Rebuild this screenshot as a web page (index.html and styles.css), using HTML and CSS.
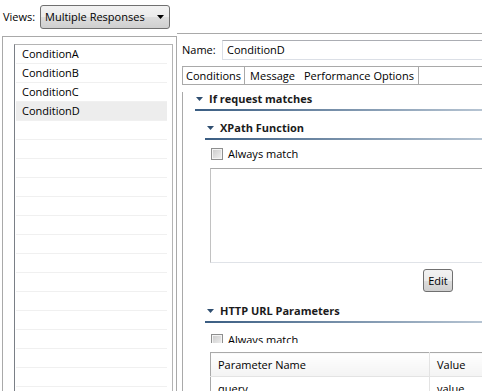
FILE: index.html
```html
<!DOCTYPE html>
<html lang="en">
<head>
    <meta charset="UTF-8">
    <meta name="viewport" content="width=device-width, initial-scale=1.0">
    <title>Multiple Responses</title>
    <link rel="stylesheet" href="styles.css">
</head>
<body>
    <div class="toolbar">
        <span class="views-label">Views:</span>
        <div class="combo">
            <span>Multiple Responses</span>
            <svg class="combo-arrow" width="7" height="4" viewBox="0 0 7 4"><path d="M0 0H7L3.5 4Z" fill="#000"/></svg>
        </div>
    </div>

    <div class="main">
        <div class="left-panel">
            <ul class="cond-list">
                <li>ConditionA</li>
                <li>ConditionB</li>
                <li>ConditionC</li>
                <li class="selected">ConditionD</li>
                <li></li><li></li><li></li><li></li><li></li>
                <li></li><li></li><li></li><li></li><li></li>
                <li></li><li></li><li></li><li></li><li></li>
            </ul>
        </div>

        <div class="right-pane">
            <div class="name-row">
                <span class="name-label">Name:</span>
                <div class="textfield">ConditionD</div>
            </div>

            <div class="tabfolder">
                <div class="tabs">
                    <div class="tab active">Conditions</div>
                    <div class="tab">Message</div>
                    <div class="tab last">Performance Options</div>
                </div>

                <div class="tab-body">
                    <div class="section">
                        <div class="section-title top">
                            <svg class="twisty" width="7" height="4" viewBox="0 0 7 4"><path d="M0 0H7L3.5 4Z"/></svg>If request matches
                        </div>
                        <div class="section-body">
                            <div class="section">
                                <div class="section-title sub">
                                    <svg class="twisty" width="7" height="4" viewBox="0 0 7 4"><path d="M0 0H7L3.5 4Z"/></svg>XPath Function
                                </div>
                                <div class="sub-body">
                                    <div class="check-row"><span class="checkbox"></span>Always match</div>
                                    <div class="textarea"></div>
                                    <div class="button-row"><button class="btn">Edit</button></div>
                                </div>
                            </div>

                            <div class="section">
                                <div class="section-title sub http">
                                    <svg class="twisty" width="7" height="4" viewBox="0 0 7 4"><path d="M0 0H7L3.5 4Z"/></svg>HTTP URL Parameters
                                </div>
                                <div class="sub-body">
                                    <div class="check-row clipped"><span class="checkbox"></span>Always match</div>
                                    <table class="params">
                                        <tr>
                                            <th class="col-name">Parameter Name</th>
                                            <th>Value</th>
                                        </tr>
                                        <tr>
                                            <td class="col-name">query</td>
                                            <td>value</td>
                                        </tr>
                                    </table>
                                </div>
                            </div>
                        </div>
                    </div>
                </div>
            </div>
        </div>
    </div>
</body>
</html>
```

FILE: styles.css
```css
html, body {
    margin: 0;
    padding: 0;
    width: 482px;
    height: 391px;
    overflow: hidden;
    background: #fff;
}
body {
    font-family: 'Open Sans', 'Noto Sans', sans-serif;
    font-size: 11px;
    line-height: 14px;
    color: #000;
}

/* top bar */
.toolbar {
    display: flex;
    align-items: center;
    height: 24px;
    padding: 5px 0 4px 3px;
}
.views-label {
    width: 37px;
}
.combo {
    box-sizing: border-box;
    width: 130px;
    height: 24px;
    display: flex;
    align-items: center;
    justify-content: space-between;
    padding: 0 5px 0 4px;
    border: 1px solid #707070;
    border-radius: 3px;
    background: linear-gradient(#f2f2f2 0%, #ebebeb 50%, #dddddd 51%, #cfcfcf 100%);
}

.main {
    display: flex;
    align-items: flex-start;
    height: 358px;
}

/* left list */
.left-panel {
    box-sizing: border-box;
    flex-shrink: 0;
    width: 175px;
    height: 400px;
    margin: 3px 0 0 2px;
    padding: 7px 3px 0 11px;
    border: 1px solid #a9a9a9;
}
.cond-list {
    list-style: none;
    margin: 0;
    padding: 0 5px 0 1px;
    height: 400px;
    border: 1px solid #b4b4b4;
    border-left-color: #7a7f86;
}
.cond-list li {
    box-sizing: border-box;
    height: 19px;
    line-height: 18px;
    padding-left: 6px;
    border-bottom: 1px solid #f0f0f0;
}
.cond-list li.selected {
    background: #ededed;
}

/* right side */
.right-pane {
    flex-shrink: 0;
    width: 340px;
    height: 400px;
    padding-left: 5px;
    border-top: 1px solid #a9a9a9;
}
.name-row {
    display: flex;
    align-items: center;
    margin-top: 6px;
}
.name-label {
    width: 40px;
}
.textfield {
    box-sizing: border-box;
    flex: 1;
    height: 20px;
    line-height: 18px;
    padding-left: 4px;
    border: 1px solid #dbdfe6;
    border-top-color: #abadb3;
}

.tabfolder {
    margin-top: 6px;
}
.tabs {
    display: flex;
    height: 17px;
    border-top: 1px solid #a9a9a9;
    border-bottom: 1px solid #a9a9a9;
}
.tab {
    line-height: 17px;
    padding: 0 4px 0 5px;
}
.tab.active {
    padding: 0 3px;
    margin-top: -1px;
    border: 1px solid #a9a9a9;
    border-bottom: none;
    border-top-left-radius: 2px;
}
.tab.last {
    border-right: 1px solid #a9a9a9;
}
.tab-body {
    height: 320px;
    padding-left: 12px;
    border-left: 1px solid #a9a9a9;
}

/* form sections */
.section-title {
    font-weight: bold;
    color: #1b1b1b;
    padding-bottom: 3px;
    border-bottom: 2px solid #3c5f84;
    border-image: linear-gradient(to right, #3a5d82, #c8d3de) 1;
}
.section-title.top {
    margin-top: 7px;
}
.section-title.sub {
    margin-top: 10px;
}
.section-title.http {
    margin-top: 12px;
}
.twisty {
    fill: #2f4e70;
    vertical-align: middle;
    margin: -2px 6px 0 1px;
}
.section-title.sub .twisty {
    margin-left: 2px;
}
.section-body {
    padding-left: 10px;
}
.sub-body {
    padding-left: 5px;
}

.check-row {
    display: flex;
    align-items: center;
    height: 14px;
    margin-top: 7px;
}
.check-row.clipped {
    height: 10px;
    margin-top: 10px;
    align-items: flex-start;
    overflow: hidden;
}
.checkbox {
    box-sizing: border-box;
    width: 12px;
    height: 12px;
    margin: 0 5px 0 1px;
    border: 1px solid #8e8f8f;
    box-shadow: inset 0 0 0 1px #f4f4f4;
    background: linear-gradient(135deg, #c9c9c9, #f2f2f2);
}
.check-row.clipped .checkbox {
    margin-top: 1px;
}

.textarea {
    box-sizing: border-box;
    height: 95px;
    margin-top: 7px;
    border: 1px solid #e0e3e8;
    border-top-color: #a9a9a9;
    border-left-color: #c2c2c2;
}
.button-row {
    margin-top: 6px;
    padding-left: 213px;
}
.btn {
    box-sizing: border-box;
    width: 30px;
    height: 23px;
    padding: 0;
    font-family: inherit;
    font-size: 11px;
    color: #000;
    border: 1px solid #707070;
    border-radius: 3px;
    background: linear-gradient(#f2f2f2 0%, #ebebeb 50%, #dddddd 51%, #cfcfcf 100%);
}

.params {
    margin-top: 9px;
    width: 100%;
    border-collapse: collapse;
    border-top: 1px solid #a9a9a9;
    border-left: 1px solid #a9a9a9;
}
.params th {
    height: 23px;
    padding: 0 0 0 7px;
    font-weight: normal;
    text-align: left;
    background: linear-gradient(#ffffff, #f3f3f3);
    border-bottom: 1px solid #e3e3e3;
}
.params td {
    height: 19px;
    padding: 2px 0 0 7px;
}
.params .col-name {
    width: 211px;
    border-right: 1px solid #e3e3e3;
}
```
